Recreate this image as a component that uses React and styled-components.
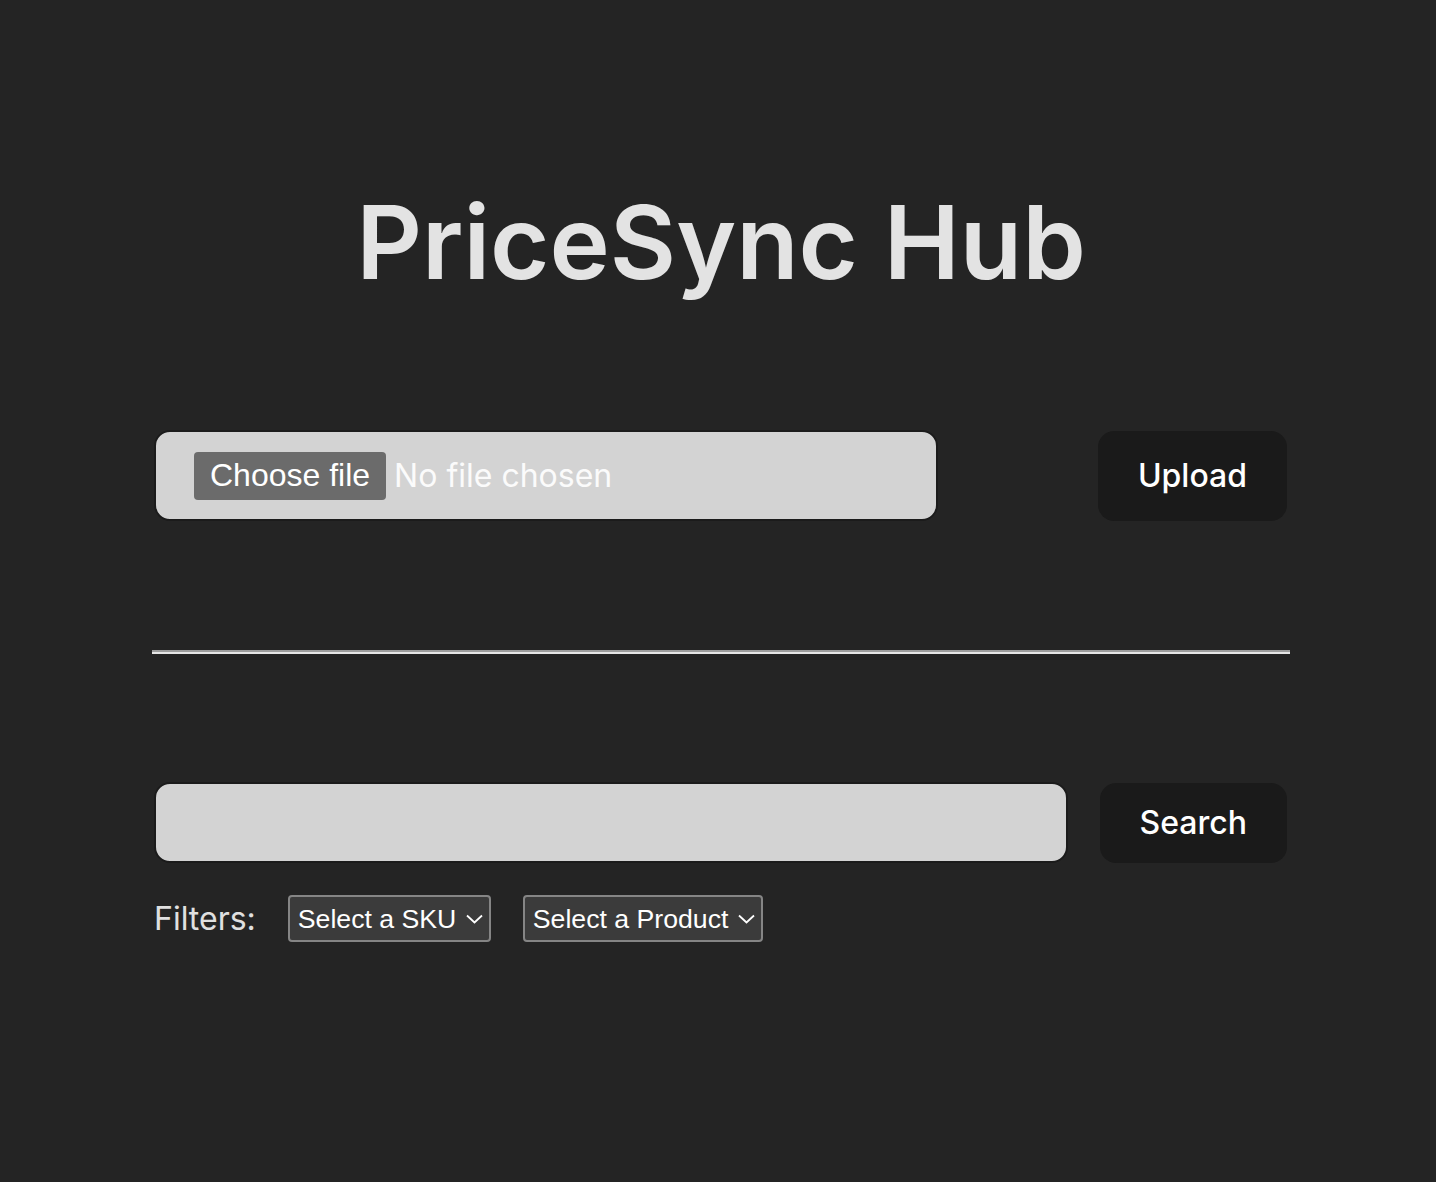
import React from "react";
import styled, { createGlobalStyle } from "styled-components";

const GlobalStyle = createGlobalStyle`
  body {
    margin: 0;
    background-color: #242424;
    color: rgba(255, 255, 255, 0.87);
    font-family: Inter, "Noto Sans", sans-serif;
  }
`;

const Chevron = () => (
  <ChevronIcon width="17" height="10" viewBox="0 0 17 10" fill="none">
    <polyline points="1,1.5 8.5,8.5 16,1.5" stroke="#fff" strokeWidth="1.8" />
  </ChevronIcon>
);

const App = () => {
  return (
    <Page>
      <GlobalStyle />
      <Main>
        <Title>PriceSync Hub</Title>
        <UploadRow>
          <FileField>
            <HiddenInput type="file" />
            <FileButton>Choose file</FileButton>
            <FileName>No file chosen</FileName>
          </FileField>
          <Button $tall>Upload</Button>
        </UploadRow>
        <Divider />
        <SearchRow>
          <SearchInput type="text" />
          <Button>Search</Button>
        </SearchRow>
        <FilterRow>
          <FilterLabel>Filters:</FilterLabel>
          <SelectWrap>
            <Select defaultValue="">
              <option value="">Select a SKU</option>
            </Select>
            <Chevron />
          </SelectWrap>
          <SelectWrap>
            <Select defaultValue="">
              <option value="">Select a Product</option>
            </Select>
            <Chevron />
          </SelectWrap>
        </FilterRow>
      </Main>
    </Page>
  );
};

const Page = styled.div`
  min-height: 100vh;
  padding: 186px 0 0 6px;
  box-sizing: border-box;
`;

const Main = styled.main`
  width: 1138px;
  margin: 0 auto;
  display: flex;
  flex-direction: column;
`;

const Title = styled.h1`
  margin: 0 0 132px;
  font-size: 102px;
  line-height: 1.1;
  font-weight: 600;
  text-align: center;
  color: #e3e3e3;
`;

const UploadRow = styled.div`
  display: flex;
  align-items: center;
  justify-content: space-between;
  padding: 0 3px 0 2px;
`;

const FileField = styled.label`
  box-sizing: border-box;
  display: flex;
  align-items: center;
  gap: 8px;
  width: 784px;
  height: 91px;
  padding: 0 38px;
  border: 2px solid #1b1b1b;
  border-radius: 16px;
  background-color: #d3d3d3;
  cursor: pointer;
`;

const HiddenInput = styled.input`
  display: none;
`;

const FileButton = styled.span`
  display: flex;
  align-items: center;
  height: 48px;
  padding: 0 16px;
  border-radius: 4px;
  background-color: #6b6b6b;
  color: #fff;
  font-family: "Liberation Sans", Arial, sans-serif;
  font-size: 32px;
`;

const FileName = styled.span`
  color: #fbfbfb;
  font-family: Inter, sans-serif;
  font-size: 32px;
`;

const Button = styled.button`
  box-sizing: border-box;
  height: ${(p) => (p.$tall ? "90px" : "80px")};
  padding: 0 38px;
  border: 2px solid transparent;
  border-radius: 16px;
  background-color: #1a1a1a;
  color: #fff;
  font-family: Inter, sans-serif;
  font-size: 32px;
  font-weight: 500;
  cursor: pointer;
`;

const Divider = styled.hr`
  margin: 129px 0 128px;
  height: 0;
  border: none;
  border-top: 2px solid #9d9d9d;
  border-bottom: 2px solid #e6e6e6;
`;

const SearchRow = styled.div`
  display: flex;
  align-items: center;
  gap: 32px;
  padding: 0 3px 0 2px;
`;

const SearchInput = styled.input`
  flex: 1;
  box-sizing: border-box;
  height: 81px;
  border: 2px solid #1b1b1b;
  border-radius: 16px;
  background-color: #d3d3d3;
  font-family: Inter, sans-serif;
  font-size: 32px;
  padding: 0 20px;
  outline: none;
`;

const FilterRow = styled.div`
  display: flex;
  align-items: center;
  gap: 32px;
  margin-top: 32px;
  padding-left: 2px;
`;

const FilterLabel = styled.span`
  font-size: 32px;
  color: #e0e0e0;
  font-weight: 400;
`;

const SelectWrap = styled.div`
  position: relative;
  display: flex;
`;

const Select = styled.select`
  appearance: none;
  box-sizing: border-box;
  height: 47px;
  padding: 0 32px 0 8px;
  border: 2px solid #858585;
  border-radius: 4px;
  background-color: #3b3b3b;
  color: #fff;
  font-family: "Liberation Sans", Arial, sans-serif;
  font-size: 26.67px;
`;

const ChevronIcon = styled.svg`
  position: absolute;
  right: 8px;
  top: 19px;
  pointer-events: none;
`;

export default App;
